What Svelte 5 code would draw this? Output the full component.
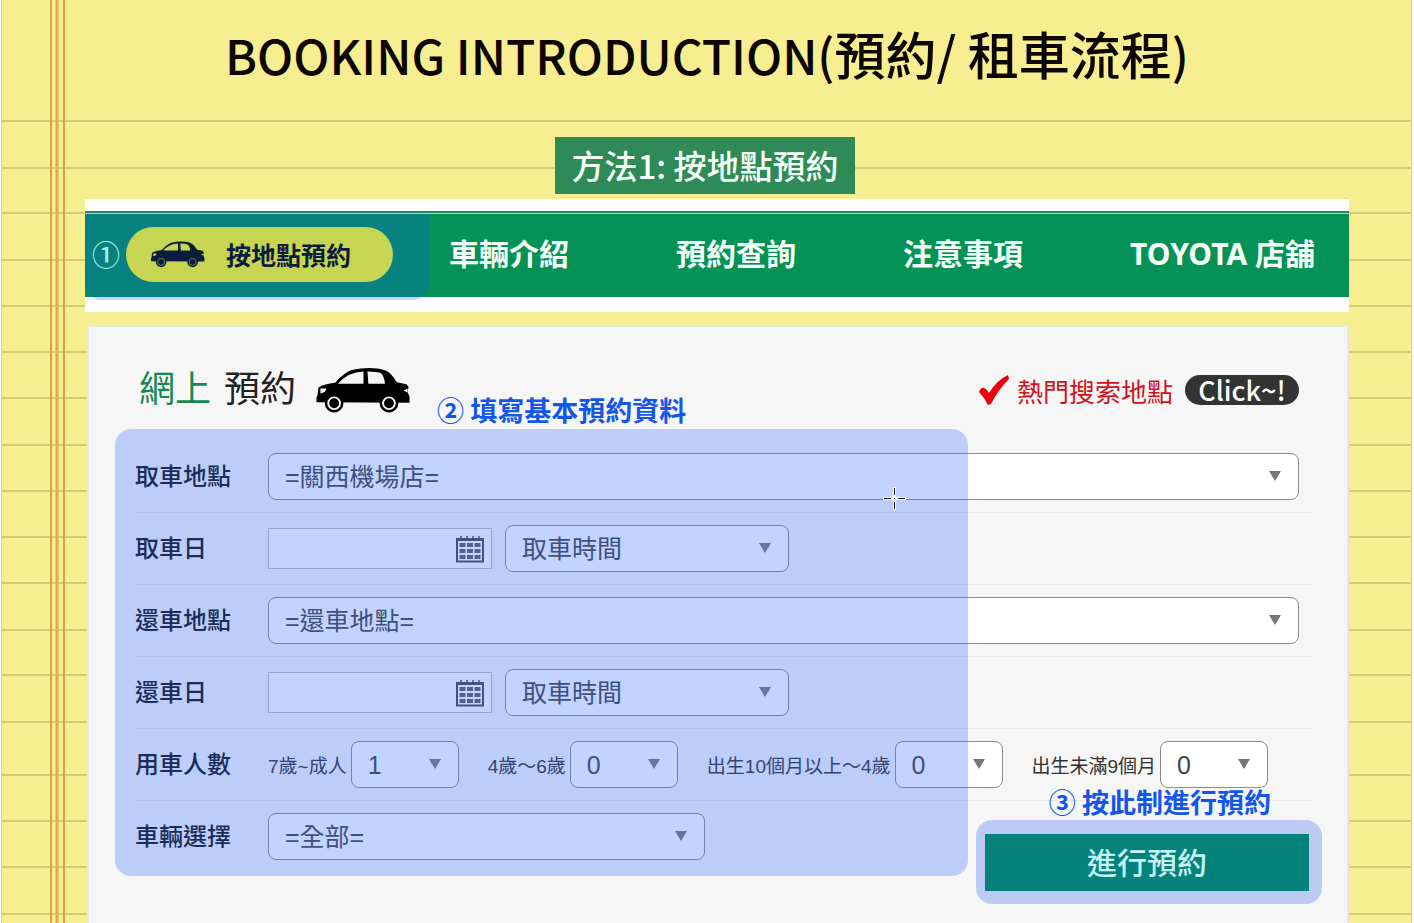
<script>
  const ruleLines = [121, 168, 213, 260, 306, 352, 398, 445, 491, 537, 583, 630, 675, 722, 775, 821, 867, 914];
  const links = ['車輛介紹', '預約查詢', '注意事項', 'TOYOTA 店舖'];
  const passengers = [
    { id: 'adult', label: '7歲~成人', value: 1 },
    { id: 'child', label: '4歲～6歲', value: 0 },
    { id: 'toddler', label: '出生10個月以上～4歲', value: 0 },
    { id: 'infant', label: '出生未滿9個月', value: 0 }
  ];
</script>

{#snippet calendar()}
  <svg class="calendar" viewBox="0 0 30 28" aria-hidden="true">
    <path d="M2 4h26v22.500h-26z" fill="#fff" stroke="#4a4a4a" stroke-width="2" />
    <path d="M1 4.500h28" stroke="#4a4a4a" stroke-width="3" />
    <path d="M6 1v4M12 1v4M18 1v4M24 1v4" stroke="#4a4a4a" stroke-width="1.500" />
    <path
      d="M4.500 8h6v4h-6zM12 8h6v4h-6zM19.500 8h6v4h-6zM4.500 14h6v4h-6zM12 14h6v4h-6zM19.500 14h6v4h-6zM4.500 20h6v4h-6zM12 20h6v4h-6zM19.500 20h6v4h-6z"
      fill="#5c5c5c"
    />
  </svg>
{/snippet}

{#snippet car()}
  <svg class="car" viewBox="0 0 96 48" aria-hidden="true">
    <path
      d="M0 36V31l1-2 1-8q6-4 17-5Q29 5 36 3 50 0 62 1.500q9 1 13 5 4 4 7 9l10 2 2 3-1 5 2 5v6z"
      fill="currentColor"
    />
    <path class="glass" d="M22 17Q32 5 48 4.500V17zM52 4.500q10 0 14 2 3 3 4 10.500H53z" />
    <path class="glass" d="M4 22l6 0q0 4-6 5zM93 22l-4 2 4 2z" />
    <circle cx="18" cy="37" r="9.500" fill="currentColor" />
    <circle class="ring" cx="18" cy="37" r="6" />
    <circle cx="74" cy="37" r="9.500" fill="currentColor" />
    <circle class="ring" cx="74" cy="37" r="6" />
  </svg>
{/snippet}

<div class="paper">
  <svg class="rules" aria-hidden="true">
    {#each ruleLines as y}
      <line x1="0" x2="100%" y1={y} y2={y} stroke="#d5ca78" stroke-width="2" />
    {/each}
    <path d="M49 0V2000M62 0V2000" stroke="#d6a252" stroke-width="2" />
    <path d="M55 0V2000" stroke="#dcac5a" stroke-width="3" />
  </svg>

  <main>
    <h1><span>BOOKING INTRODUCTION(</span>預約/ 租車流程<span>)</span></h1>
    <h2>方法1: 按地點預約</h2>

    <div class="nav-frame">
      <nav>
        <div class="current">
          <span class="step">①</span>
          <a class="pill" href="#location">{@render car()}按地點預約</a>
        </div>
        <div class="links">
          {#each links as link}
            <a href="#{link}">{link}</a>
          {/each}
        </div>
      </nav>
    </div>

    <section class="panel">
      <header>
        <h3><span>網上</span> 預約</h3>
        {@render car()}
        <p class="note">② 填寫基本預約資料</p>
        <a class="popular" href="#popular">
          <svg class="tick" viewBox="0 0 30 30" aria-hidden="true">
            <path d="M0 17q2-5 5-4 3 1 5 5Q18 5 29 0l1 4Q19 15 12 29l-3 1Q5 22 0 17z" fill="#e8000f" />
          </svg>
          熱門搜索地點
          <span class="click">Click~!</span>
        </a>
      </header>

      <form onsubmit={(e) => e.preventDefault()}>
        <div class="row">
          <label class="name" for="pickup">取車地點</label>
          <div class="select wide"><select id="pickup"><option>=關西機場店=</option></select></div>
        </div>
        <div class="row">
          <label class="name" for="pickup-date">取車日</label>
          <div class="date"><input id="pickup-date" type="text" />{@render calendar()}</div>
          <div class="select time">
            <select aria-label="取車時間"><option>取車時間</option></select>
          </div>
        </div>
        <div class="row">
          <label class="name" for="return">還車地點</label>
          <div class="select wide"><select id="return"><option>=還車地點=</option></select></div>
        </div>
        <div class="row">
          <label class="name" for="return-date">還車日</label>
          <div class="date"><input id="return-date" type="text" />{@render calendar()}</div>
          <div class="select time">
            <select aria-label="還車時間"><option>取車時間</option></select>
          </div>
        </div>
        <div class="row">
          <span class="name">用車人數</span>
          <div class="people">
            {#each passengers as p}
              <div class="person">
                <label for={p.id}>{p.label}</label>
                <div class="select count">
                  <select id={p.id}><option>{p.value}</option></select>
                </div>
              </div>
            {/each}
          </div>
        </div>
        <div class="row last">
          <label class="name" for="car-type">車輛選擇</label>
          <div class="select type"><select id="car-type"><option>=全部=</option></select></div>
          <div class="submit">
            <p class="note">③ 按此制進行預約</p>
            <button type="submit">進行預約</button>
          </div>
        </div>

        <div class="highlight"></div>
        <svg class="crosshair" viewBox="0 0 23 23" aria-hidden="true">
          <path d="M11.500 0v23M0 11.500h23" stroke="#fff" stroke-width="3" />
          <path d="M11.500 1v7M11.500 15v7M1 11.500h7M15 11.500h7M11 11.500h1" stroke="#111" />
        </svg>
      </form>
    </section>
  </main>
</div>

<style>
  :global(body) {
    margin: 0;
    background: #fff;
  }
  .paper {
    position: relative;
    box-sizing: border-box;
    min-height: 100vh;
    margin: 0 2px 0 1px;
    border: solid #cfc9c9;
    border-width: 0 1px;
    background: #f7ee92;
    display: flex;
    font-family: 'Noto Sans CJK TC', sans-serif;
    overflow: hidden;
  }
  .rules {
    position: absolute;
    inset: 0;
    width: 100%;
    height: 100%;
  }
  main {
    position: relative;
    flex: 1;
    display: flex;
    flex-direction: column;
    padding: 0 62px 0 83px;
  }
  h1,
  h2,
  h3,
  p {
    margin: 0;
    white-space: nowrap;
  }
  a {
    color: inherit;
    text-decoration: none;
  }
  h1 {
    align-self: center;
    margin-right: 20px;
    padding-top: 16px;
    height: 119px;
    box-sizing: border-box;
    font-size: 51px;
    line-height: 74px;
    font-weight: 500;
    color: #0c0600;
  }
  h1 span {
    font-size: 48px;
  }
  h2 {
    align-self: center;
    margin: 18px 24px 5px 0;
    padding: 0 16px;
    background: #2e8b57;
    color: #f4fff8;
    font-size: 33px;
    line-height: 57px;
    font-weight: 500;
  }
  .nav-frame {
    background: #fff;
    padding: 12px 0 15px;
  }
  nav {
    display: flex;
    height: 86px;
    background: linear-gradient(#288a5c 2px, #a5dcc0 2px, #a5dcc0 3px, #049256 3px);
    color: #f4fff8;
    font-family: 'Noto Sans', 'Noto Sans CJK TC', sans-serif;
    font-size: 30px;
    font-weight: 700;
  }
  .current {
    display: flex;
    align-items: center;
    box-sizing: border-box;
    width: 344px;
    height: 89px;
    padding: 0 0 3px 7px;
    gap: 6px;
    border-radius: 0 0 16px 16px;
    background: linear-gradient(transparent 3px, #07827f 3px, #07827f 86px, #c2d3ff 86px);
  }
  .step {
    width: 28px;
    font-family: 'Noto Sans CJK TC', sans-serif;
    font-size: 28px;
    font-weight: 500;
    color: #a3f0ee;
  }
  .pill {
    display: flex;
    align-items: center;
    gap: 21px;
    box-sizing: border-box;
    width: 267px;
    height: 55px;
    padding-left: 25px;
    border-radius: 28px;
    background: #c6d552;
    color: #0b1c3c;
    font-size: 25px;
  }
  .pill .car {
    width: 54px;
    height: 27px;
  }
  .links {
    flex: 1;
    display: flex;
    align-items: center;
    justify-content: space-between;
    padding: 0 34px 4px 20px;
    white-space: nowrap;
  }
  .car .glass {
    fill: #f6f6f6;
  }
  .car .ring {
    fill: none;
    stroke: #f6f6f6;
    stroke-width: 2;
  }
  .pill .glass {
    fill: #c6d552;
  }
  .pill .ring {
    stroke: #5d6d48;
  }
  .panel {
    flex: 1;
    margin: 13px 0 0 2px;
    border: solid #e9e8e0;
    border-width: 2px 2px 0;
    background: #f6f6f6;
    color: #222;
  }
  header {
    display: flex;
    align-items: center;
    height: 126px;
    padding: 0 48px 0 50px;
  }
  h3 {
    margin: 0 20px 8px 0;
    font-size: 36px;
    line-height: 40px;
    font-weight: 400;
    word-spacing: 5px;
  }
  h3 span {
    color: #128a54;
  }
  header .car {
    width: 95px;
    height: 47px;
    flex: none;
    color: #000;
  }
  .note {
    color: #1257ea;
    font-size: 27px;
    line-height: 30px;
    font-weight: 700;
  }
  header .note {
    margin: 40px 0 0 26px;
  }
  .popular {
    display: flex;
    align-items: center;
    margin-left: auto;
    gap: 8px;
    color: #d3121c;
    font-size: 26px;
    white-space: nowrap;
  }
  .tick {
    width: 30px;
    height: 30px;
  }
  .click {
    margin-left: 4px;
    box-sizing: border-box;
    width: 114px;
    border-radius: 15px;
    background: #333;
    color: #fff;
    font-size: 27px;
    font-weight: 500;
    line-height: 30px;
    text-align: center;
  }
  form {
    position: relative;
    padding: 0 37px 0 46px;
  }
  .row {
    display: flex;
    align-items: center;
    height: 47px;
    padding-bottom: 12px;
    margin-bottom: 12px;
    border-bottom: 1px solid #ebebeb;
  }
  .row.last {
    border: 0;
    margin: 0;
    padding: 0;
    align-items: flex-start;
  }
  .name {
    flex: none;
    width: 133px;
    padding-bottom: 4px;
    font-size: 24px;
    line-height: 43px;
    font-weight: 500;
    color: #111;
  }
  .select {
    position: relative;
  }
  .select::after {
    content: '';
    position: absolute;
    right: 18px;
    top: 18px;
    border: solid transparent;
    border-width: 10px 6px 0;
    border-top-color: #777;
    pointer-events: none;
  }
  select {
    appearance: none;
    display: block;
    box-sizing: border-box;
    width: 100%;
    height: 47px;
    padding: 0 16px;
    border: 1px solid #8c8c8c;
    border-radius: 8px;
    background: #fff;
    color: #444;
    font: 25px 'Liberation Sans', 'Noto Sans CJK TC', sans-serif;
  }
  .wide {
    flex: 1;
    margin-right: 11px;
  }
  .time {
    width: 284px;
    margin-left: 13px;
  }
  .type {
    width: 437px;
  }
  .count {
    width: 108px;
  }
  .date {
    display: flex;
    align-items: center;
    box-sizing: border-box;
    width: 224px;
    height: 41px;
    padding-right: 6px;
    border: 1px solid #bbb;
    background: #fff;
  }
  input {
    flex: 1;
    min-width: 0;
    height: 35px;
    padding: 0 8px;
    box-sizing: border-box;
    border: 0;
    background: none;
    font: 24px 'Liberation Sans', sans-serif;
  }
  .calendar {
    width: 30px;
    height: 28px;
  }
  .people {
    display: flex;
    gap: 29px;
  }
  .person {
    display: flex;
    align-items: center;
    gap: 4px;
    color: #333;
    font: 19px 'Liberation Sans', 'Noto Sans CJK TC', sans-serif;
    white-space: nowrap;
  }
  .submit {
    position: relative;
    z-index: 1;
    flex: none;
    margin: 7px -12px 17px auto;
    padding: 14px 13px 13px 9px;
    border-radius: 16px;
    background: #bccbf6;
  }
  .submit .note {
    position: absolute;
    right: 51px;
    bottom: 100%;
    margin-bottom: 3px;
  }
  button {
    display: block;
    width: 324px;
    height: 57px;
    padding: 0 0 4px;
    border: 0;
    background: #04827b;
    color: #c5f4f5;
    font: 500 30px 'Noto Sans CJK TC', sans-serif;
  }
  .highlight {
    position: absolute;
    top: -24px;
    left: 26px;
    right: 379px;
    height: 447px;
    border-radius: 16px;
    background: rgb(52 108 255 / 0.3);
    pointer-events: none;
  }
  .crosshair {
    position: absolute;
    right: 441px;
    top: 34px;
    width: 23px;
    height: 23px;
    pointer-events: none;
  }
</style>
